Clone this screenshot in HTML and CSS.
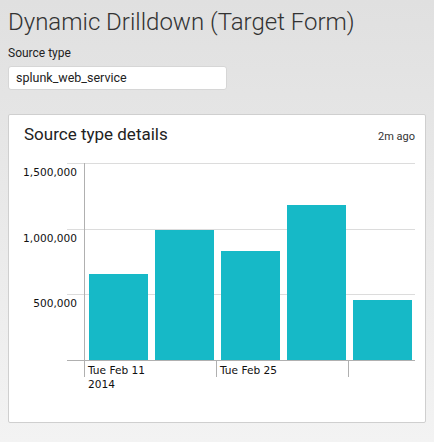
FILE: index.html
```html
<!DOCTYPE html>
<html>
<head>
<meta charset="utf-8">
<link rel="stylesheet" href="styles.css">
</head>
<body>
<h1 class="title">Dynamic Drilldown (Target Form)</h1>
<div class="field">
  <label class="field-label">Source type</label>
  <div class="input">splunk_web_service</div>
</div>
<section class="panel">
  <header class="panel-head">
    <h2 class="panel-title">Source type details</h2>
    <span class="panel-time">2m ago</span>
  </header>
  <svg class="chart" width="416" height="240" viewBox="0 0 416 240">
    <g class="grid">
      <line x1="58" y1="13.5" x2="406" y2="13.5"/>
      <line x1="58" y1="79.5" x2="406" y2="79.5"/>
      <line x1="58" y1="144.5" x2="406" y2="144.5"/>
    </g>
    <g class="bars">
      <rect x="80" y="124" width="59" height="86"/>
      <rect x="146" y="80" width="59" height="130"/>
      <rect x="212" y="101" width="59" height="109"/>
      <rect x="278" y="55" width="59" height="155"/>
      <rect x="344" y="150" width="59" height="60"/>
    </g>
    <g class="axis">
      <line x1="75.5" y1="13" x2="75.5" y2="210"/>
      <line x1="58" y1="210.5" x2="406" y2="210.5"/>
      <line x1="75.5" y1="210" x2="75.5" y2="227"/>
      <line x1="207.5" y1="210" x2="207.5" y2="227"/>
      <line x1="339.5" y1="210" x2="339.5" y2="227"/>
    </g>
    <g class="labels">
      <text class="ylabel" x="68" y="26">1,500,000</text>
      <text class="ylabel" x="68" y="92">1,000,000</text>
      <text class="ylabel" x="68" y="157">500,000</text>
      <text x="79" y="224">Tue Feb 11</text>
      <text x="79" y="238">2014</text>
      <text x="211" y="224">Tue Feb 25</text>
    </g>
  </svg>
  <div class="panel-foot"></div>
</section>
</body>
</html>
```
FILE: styles.css
```css
html {
  background: linear-gradient(#e0e0e0, #f3f3f3);
  min-height: 100%;
}
body {
  margin: 8px;
  font-family: Roboto, "Liberation Sans", sans-serif;
  color: #333;
}
.title {
  margin: 0;
  font-size: 24px;
  font-weight: 300;
  line-height: 28px;
  color: #333;
}
.field {
  margin-top: 10px;
  display: flex;
  flex-direction: column;
  gap: 6px;
}
.field-label {
  font-size: 12px;
  font-weight: 400;
  line-height: 14px;
  color: #222;
}
.input {
  width: 219px;
  height: 24px;
  box-sizing: border-box;
  padding: 0 7px;
  background: #fff;
  border: 1px solid #d6d6d6;
  border-radius: 3px;
  font-size: 12.5px;
  line-height: 22px;
  color: #222;
}
.panel {
  margin-top: 24px;
  background: #fff;
  border: 1px solid #cfcfcf;
  border-radius: 2px;
  display: flex;
  flex-direction: column;
}
.panel-head {
  display: flex;
  justify-content: space-between;
  align-items: baseline;
  padding: 9px 10px 0 15px;
  height: 26px;
}
.panel-title {
  margin: 0;
  font-size: 17px;
  font-weight: 400;
  color: #222;
}
.panel-time {
  font-size: 11px;
  color: #333;
}
.chart {
  display: block;
}
.panel-foot {
  height: 32px;
}
.grid line {
  stroke: #dcdcdc;
  stroke-width: 1;
}
.axis line {
  stroke: #b0b0b0;
  stroke-width: 1;
}
.bars rect {
  fill: #16b9c7;
}
.labels text {
  font-family: "DejaVu Sans", sans-serif;
  font-size: 10.6px;
  fill: #111;
}
.labels .ylabel {
  text-anchor: end;
}
```
